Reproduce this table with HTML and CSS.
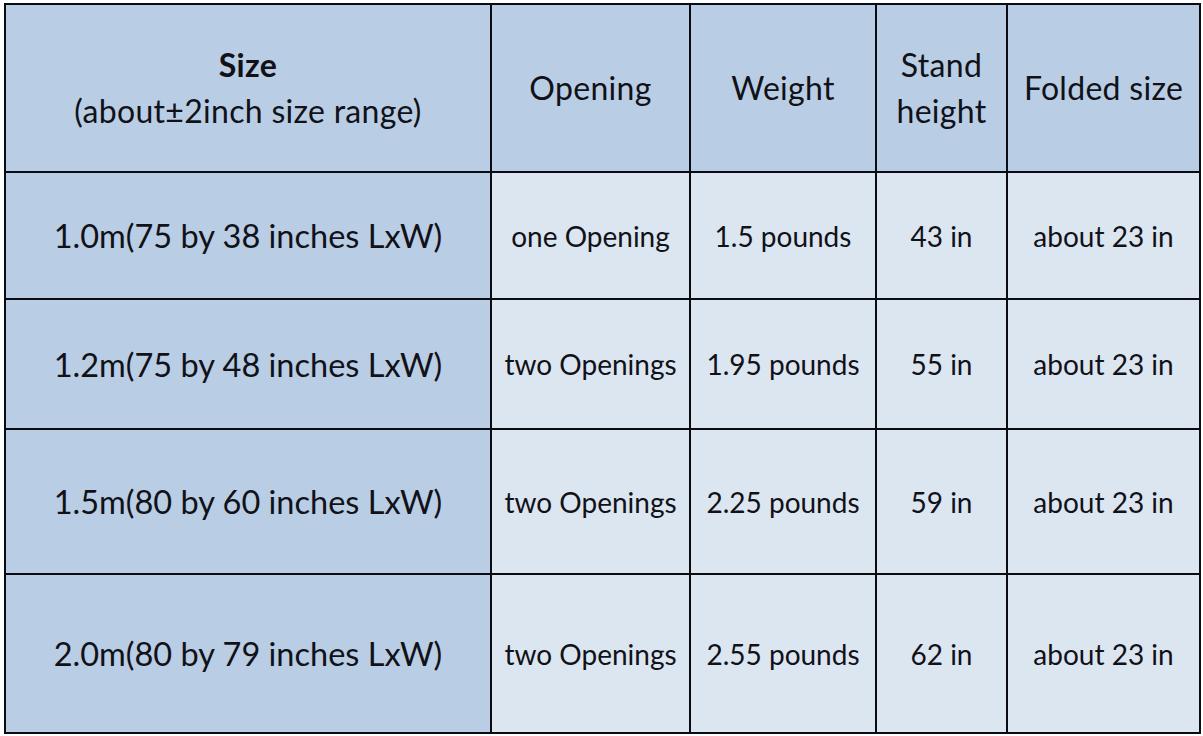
FILE: index.html
```html
<!DOCTYPE html>
<html>
<head>
<meta charset="utf-8">
<link rel="stylesheet" href="styles.css">
</head>
<body>
<div class="table">
  <div class="cell head first"><span class="bold">Size</span><span>(about±2inch size range)</span></div>
  <div class="cell head">Opening</div>
  <div class="cell head">Weight</div>
  <div class="cell head"><span>Stand</span><span>height</span></div>
  <div class="cell head">Folded size</div>

  <div class="cell first big">1.0m(75 by 38 inches LxW)</div>
  <div class="cell light">one Opening</div>
  <div class="cell light">1.5 pounds</div>
  <div class="cell light">43 in</div>
  <div class="cell light">about 23 in</div>

  <div class="cell first big">1.2m(75 by 48 inches LxW)</div>
  <div class="cell light">two Openings</div>
  <div class="cell light">1.95 pounds</div>
  <div class="cell light">55 in</div>
  <div class="cell light">about 23 in</div>

  <div class="cell first big">1.5m(80 by 60 inches LxW)</div>
  <div class="cell light">two Openings</div>
  <div class="cell light">2.25 pounds</div>
  <div class="cell light">59 in</div>
  <div class="cell light">about 23 in</div>

  <div class="cell first big">2.0m(80 by 79 inches LxW)</div>
  <div class="cell light">two Openings</div>
  <div class="cell light">2.55 pounds</div>
  <div class="cell light">62 in</div>
  <div class="cell light">about 23 in</div>
</div>
</body>
</html>
```
FILE: styles.css
```css
html, body {
  margin: 0;
  padding: 0;
  background: #ffffff;
}
body {
  font-family: Lato, "Open Sans", sans-serif;
  color: #111118;
}
.table {
  margin: 3px 0 0 4px;
  width: 1197px;
  display: grid;
  grid-template-columns: 484px 197px 184px 129px 191px;
  grid-template-rows: 166px 125px 128px 143px 157px;
  gap: 2px;
  padding: 2px;
  box-sizing: border-box;
  background: #0b0b12;
}
.cell {
  display: flex;
  flex-direction: column;
  align-items: center;
  justify-content: center;
  text-align: center;
  white-space: nowrap;
}
.head {
  background: #b9cde4;
  font-size: 32px;
  letter-spacing: 0.3px;
  line-height: 46px;
}
.first {
  background: #b9cde4;
}
.light {
  background: #dce6f1;
  font-size: 28px;
}
.big {
  font-size: 32.5px;
}
.bold {
  font-weight: 700;
}
```
